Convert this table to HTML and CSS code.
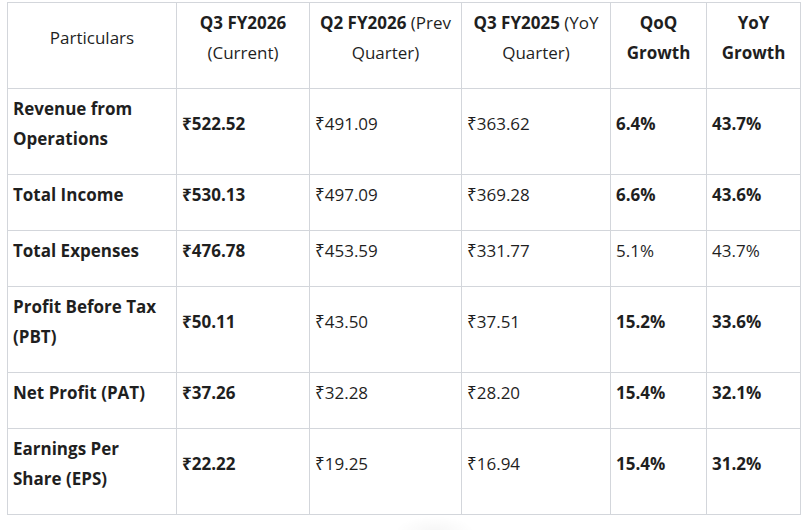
FILE: index.html
```html
<!DOCTYPE html>
<html lang="en">
<head>
<meta charset="utf-8">
<title>Quarterly Results</title>
<link rel="stylesheet" href="styles.css">
</head>
<body>
<div class="wrap">
<table class="results">
  <colgroup>
    <col class="c1"><col class="c2"><col class="c3"><col class="c4"><col class="c5"><col class="c6">
  </colgroup>
  <thead>
    <tr>
      <th><span class="reg">Particulars</span></th>
      <th><b>Q3 FY2026</b> <span class="reg">(Current)</span></th>
      <th><b>Q2 FY2026</b> <span class="reg">(Prev Quarter)</span></th>
      <th><b>Q3 FY2025</b> <span class="reg">(YoY Quarter)</span></th>
      <th><b>QoQ Growth</b></th>
      <th><b>YoY Growth</b></th>
    </tr>
  </thead>
  <tbody>
    <tr>
      <td><b>Revenue from Operations</b></td>
      <td><b>₹522.52</b></td>
      <td>₹491.09</td>
      <td>₹363.62</td>
      <td><b>6.4%</b></td>
      <td><b>43.7%</b></td>
    </tr>
    <tr>
      <td><b>Total Income</b></td>
      <td><b>₹530.13</b></td>
      <td>₹497.09</td>
      <td>₹369.28</td>
      <td><b>6.6%</b></td>
      <td><b>43.6%</b></td>
    </tr>
    <tr>
      <td><b>Total Expenses</b></td>
      <td><b>₹476.78</b></td>
      <td>₹453.59</td>
      <td>₹331.77</td>
      <td>5.1%</td>
      <td>43.7%</td>
    </tr>
    <tr>
      <td><b>Profit Before Tax (PBT)</b></td>
      <td><b>₹50.11</b></td>
      <td>₹43.50</td>
      <td>₹37.51</td>
      <td><b>15.2%</b></td>
      <td><b>33.6%</b></td>
    </tr>
    <tr>
      <td><b>Net Profit (PAT)</b></td>
      <td><b>₹37.26</b></td>
      <td>₹32.28</td>
      <td>₹28.20</td>
      <td><b>15.4%</b></td>
      <td><b>32.1%</b></td>
    </tr>
    <tr>
      <td><b>Earnings Per Share (EPS)</b></td>
      <td><b>₹22.22</b></td>
      <td>₹19.25</td>
      <td>₹16.94</td>
      <td><b>15.4%</b></td>
      <td><b>31.2%</b></td>
    </tr>
  </tbody>
</table>
<div class="glow"></div>
</div>
</body>
</html>
```
FILE: styles.css
```css
html, body {
  margin: 0;
  padding: 0;
  background: #ffffff;
}
body {
  font-family: "Open Sans", "Noto Sans", "DejaVu Sans", sans-serif;
  color: #1f1f1f;
  font-size: 17px;
}
.wrap {
  position: relative;
  padding: 2px 0 0 7px;
  height: 528px;
}
.results {
  border-collapse: collapse;
  table-layout: fixed;
  width: 793px;
}
.c1 { width: 169px; }
.c2 { width: 133px; }
.c3 { width: 152px; }
.c4 { width: 149px; }
.c5 { width: 96px; }
.c6 { width: 94px; }
.results th,
.results td {
  border: 1px solid #d3d6db;
  padding: 5px 6px 20px 5px;
  line-height: 30px;
  vertical-align: middle;
  text-align: left;
  font-weight: 400;
}
.results th {
  text-align: center;
  padding-left: 5px;
  padding-right: 5px;
}
.results b {
  font-weight: 700;
}
.glow {
  position: absolute;
  left: 395px;
  top: 516px;
  width: 80px;
  height: 30px;
  border-radius: 50%;
  background: radial-gradient(ellipse at center, rgba(0,0,0,0.035), rgba(0,0,0,0) 70%);
}
```
